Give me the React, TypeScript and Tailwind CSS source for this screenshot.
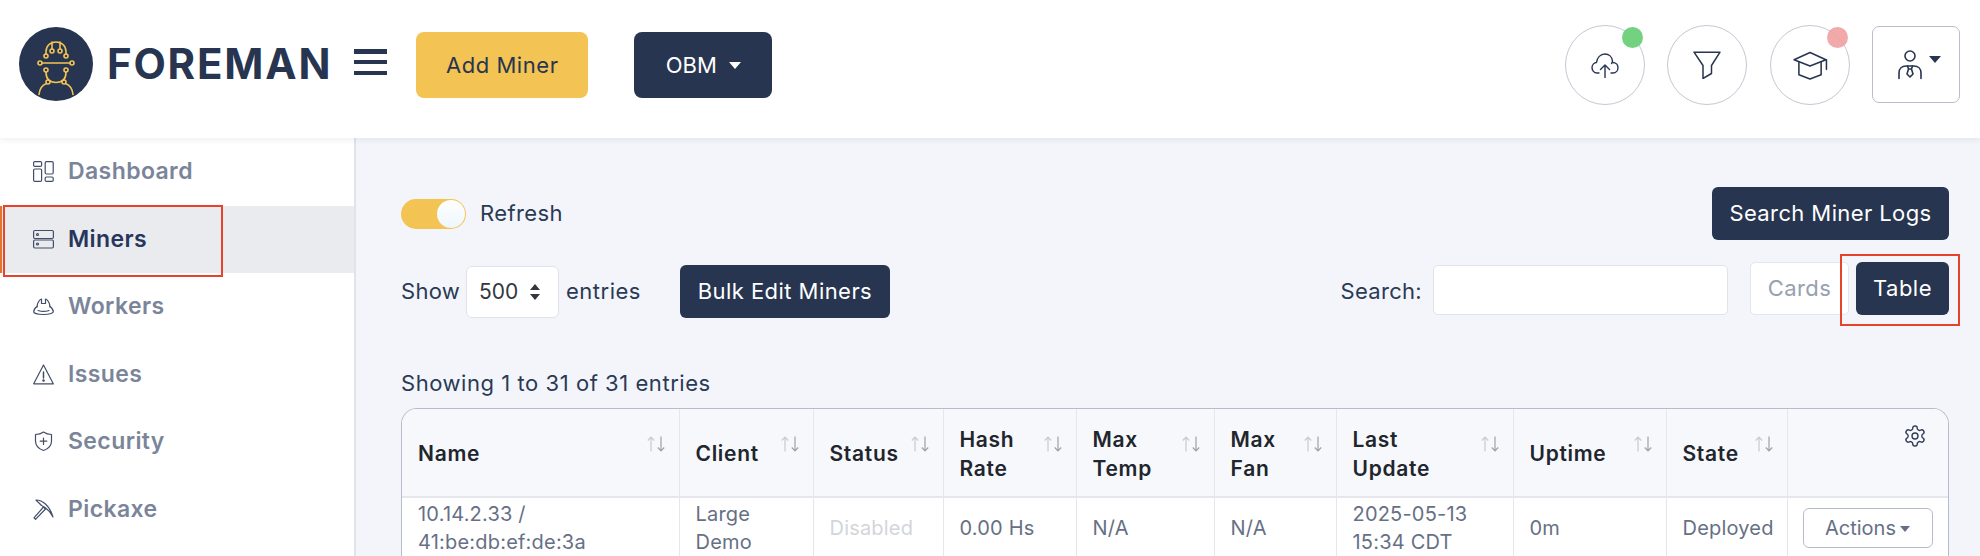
import React from "react";

const NAVY = "#273550";

function Logo() {
  return (
    <svg viewBox="0 0 74 74" className="w-[74px] h-[74px] shrink-0">
      <circle cx="37" cy="37" r="37" fill={NAVY} />
      <g fill="none" stroke="#f3c353" strokeWidth="1.6" strokeLinecap="round">
        <path d="M27 27.500v-2.500c0-6 4-10 10-10s10 4 10 10v2.500" />
        <circle cx="27" cy="29" r="2" />
        <circle cx="47" cy="29" r="2" />
        <path d="M33 15v7M41 15v7" />
        <circle cx="33" cy="24" r="2" />
        <circle cx="41" cy="24" r="2" />
        <path d="M23 36h28" />
        <circle cx="21" cy="36" r="2" />
        <circle cx="53" cy="36" r="2" />
        <circle cx="27" cy="43" r="2" />
        <circle cx="47" cy="43" r="2" />
        <path d="M27 45c0 7 4 10.500 10 10.500s10-3.500 10-10.500" />
        <circle cx="29" cy="55" r="2" />
        <circle cx="45" cy="55" r="2" />
        <path d="M27.500 56.500c-4 1.500-7 5.500-7.500 11M46.500 56.500c4 1.500 7 5.500 7.500 11" />
      </g>
    </svg>
  );
}

function CloudIcon() {
  return (
    <svg viewBox="0 0 28 25" className="w-[28px] h-[25px]" fill="none" stroke={NAVY} strokeWidth="1.400" strokeLinecap="round" strokeLinejoin="round">
      <path d="M8 20H6C3 20 1 17.500 1 14.500 1 11.500 3.500 9.500 5.500 9.500 6 4.500 9.500 1 14 1 18 1 21 4 21.500 8 21.500 9 21 10 20.500 10.500" />
      <path d="M21.500 9.500C25 9.500 27 12 27 14.500 27 17.500 25 20 22 20H20" />
      <path d="M14 24.500V12M9.500 16.500L14 12l4.500 4.500" />
    </svg>
  );
}

function FunnelIcon() {
  return (
    <svg viewBox="0 0 28 28" className="w-[28px] h-[28px]" fill="none" stroke={NAVY} strokeWidth="1.500" strokeLinejoin="round">
      <path d="M1 1.200h26L18.500 14.500V22.500L10 27.500V14.500Z" />
    </svg>
  );
}

function CapIcon() {
  return (
    <svg viewBox="0 0 36 30" className="w-[35px] h-[29px]" fill="none" stroke={NAVY} strokeWidth="1.600" strokeLinejoin="round" strokeLinecap="round">
      <path d="M1 9L17.500 1.500 34 9 17.500 15.500Z" />
      <path d="M6 11.500V24.500L17.500 29 29 24.500V11.500" />
      <path d="M34.500 9V19" />
    </svg>
  );
}

function UserIcon() {
  return (
    <svg viewBox="0 0 24 30" className="w-[24px] h-[30px]" fill="none" stroke={NAVY} strokeWidth="1.600" strokeLinejoin="round" strokeLinecap="round">
      <circle cx="12" cy="6" r="5" />
      <path d="M1 28.500V23c0-4.500 3-7 7-7h8c4 0 7 2.500 7 7v5.500" />
      <path d="M9.500 16l1 3-1.500 5 3 3 3-3-1.500-5 1-3M10.500 19h3" />
    </svg>
  );
}

function NavIcon({ name }: { name: string }) {
  const common = { viewBox: "0 0 21 21", className: "w-[21px] h-[21px] shrink-0", fill: "none", stroke: "#414e68", strokeWidth: 1.2, strokeLinejoin: "round" as const, strokeLinecap: "round" as const };
  if (name === "Dashboard") {
    return (
      <svg {...common}>
        <rect x="0.600" y="0.600" width="8" height="4.800" rx="1.200" />
        <rect x="0.600" y="8" width="8" height="12.400" rx="1.200" />
        <rect x="12.200" y="0.600" width="8" height="12.400" rx="1.200" />
        <rect x="12.200" y="16" width="8" height="4.400" rx="1.200" />
      </svg>
    );
  }
  if (name === "Miners") {
    return (
      <svg {...common}>
        <rect x="0.600" y="1.500" width="19.800" height="8" rx="1.200" />
        <rect x="0.600" y="11" width="19.800" height="8" rx="1.200" />
        <circle cx="4.500" cy="5.500" r="1" />
        <circle cx="4.500" cy="15" r="1" />
      </svg>
    );
  }
  if (name === "Workers") {
    return (
      <svg {...common}>
        <path d="M4 11C4 7 6.500 3.500 8.500 3V7.500h4V3C14.500 3.500 17 7 17 11" />
        <path d="M4 10.500C2 12 .7 14.200 .7 15.800c0 1 2.800 2.700 9.800 2.700s9.800-1.700 9.800-2.700C20.300 14.200 19 12 17 10.500" />
        <path d="M5 14.500c3 1 8 1 11 0" />
      </svg>
    );
  }
  if (name === "Issues") {
    return (
      <svg {...common}>
        <path d="M10.500 1L.7 19.800h19.600Z" />
        <path d="M10.500 8v6" strokeWidth="1.500" />
        <circle cx="10.500" cy="16.500" r=".7" fill="#414e68" />
      </svg>
    );
  }
  if (name === "Security") {
    return (
      <svg {...common}>
        <path d="M10.500 1c2 1.500 5 2.500 8 2.500V10c0 4.500-3.500 8-8 9.500C6 18 2.500 14.500 2.500 10V3.500C5.500 3.500 8.500 2.500 10.500 1Z" />
        <path d="M10.500 7v6.500M7.200 10.200h6.600" />
      </svg>
    );
  }
  return (
    <svg {...common}>
      <path d="M3 1C9 1 16.500 6 20 18 17 12 13 8.500 8.500 6.500L5.500 3.500C4.500 2.800 3.500 2 3 1Z" />
      <path d="M1 18.800l1.500 1.500L12.500 10 10.500 8Z" />
    </svg>
  );
}

function SortIcon() {
  return (
    <svg viewBox="0 0 20 16" className="w-[20px] h-[16px] shrink-0" fill="none" strokeWidth="1.200">
      <path d="M5 15.500V1.500M1.800 4.500L5 1.200l3.200 3.300" stroke="#c6cad1" />
      <path d="M15 .5v14M11.800 11.500L15 14.800l3.200-3.300" stroke="#9ba1ab" />
    </svg>
  );
}

const NAV = ["Dashboard", "Miners", "Workers", "Issues", "Security", "Pickaxe"];

function Sidebar() {
  return (
    <aside className="w-[356px] shrink-0 bg-white border-r-2 border-[#dfe3ea]">
      {NAV.map((item) => {
        const active = item === "Miners";
        return (
          <div
            key={item}
            className={`relative flex items-center h-[67.500px] pl-[33px] gap-[14px] text-[23px] tracking-[0.4px] font-semibold ${active ? "bg-[#e9ebef] text-[#27365a]" : "text-[#7b859a]"}`}
          >
            <NavIcon name={item} />
            <span className="leading-none">{item}</span>
            {active && (
              <>
                <span className="absolute left-0 top-0 bottom-0 w-[2px] bg-[#e0752d]" />
                <span className="absolute left-[3px] top-[-1px] w-[220px] h-[72px] border-2 border-[#e8432a]" />
              </>
            )}
          </div>
        );
      })}
    </aside>
  );
}

type Col = { label: string[]; width: number; cell: React.ReactNode };

const COLUMNS: Col[] = [
  { label: ["Name"], width: 277, cell: <>10.14.2.33 /<br />41:be:db:ef:de:3a</> },
  { label: ["Client"], width: 134, cell: <>Large<br />Demo</> },
  { label: ["Status"], width: 130, cell: <span className="text-[#d3d5d9]">Disabled</span> },
  { label: ["Hash", "Rate"], width: 133, cell: "0.00 Hs" },
  { label: ["Max", "Temp"], width: 138, cell: "N/A" },
  { label: ["Max", "Fan"], width: 122, cell: "N/A" },
  { label: ["Last", "Update"], width: 177, cell: <>2025-05-13<br />15:34 CDT</> },
  { label: ["Uptime"], width: 153, cell: "0m" },
  { label: ["State"], width: 121, cell: "Deployed" },
];

function MinersTable() {
  return (
    <div className="w-[1548px] h-[200px] rounded-tl-[16px] rounded-tr-[16px] border border-b-0 border-[#b6bccb] overflow-hidden bg-white">
      <table className="table-fixed border-collapse w-full">
        <colgroup>
          {COLUMNS.map((c) => (
            <col key={c.label.join()} style={{ width: c.width }} />
          ))}
          <col />
        </colgroup>
        <thead>
          <tr className="h-[88px] bg-[#f7f8fb] border-b-2 border-[#e5e7ec]">
            {COLUMNS.map((c, i) => (
              <th
                key={c.label.join()}
                className={`relative pl-[16px] pt-[2px] text-left align-middle text-[21px] tracking-[0.7px] leading-[29px] font-semibold text-[#21252d] ${i > 0 ? "border-l border-[#e5e7ec]" : ""}`}
              >
                {c.label.map((l) => (
                  <div key={l}>{l}</div>
                ))}
                <span className="absolute right-[13px] top-[27px]">
                  <SortIcon />
                </span>
              </th>
            ))}
            <th className="relative border-l border-[#e5e7ec]">
              <svg viewBox="0 0 24 24" className="absolute right-[21px] top-[15px] w-[24px] h-[24px]" fill="none" stroke="#2f3d58" strokeWidth="1.400" strokeLinecap="round" strokeLinejoin="round">
                <path d="M12.220 2h-.44a2 2 0 0 0-2 2v.18a2 2 0 0 1-1 1.730l-.43.250a2 2 0 0 1-2 0l-.150-.080a2 2 0 0 0-2.730.730l-.220.380a2 2 0 0 0 .730 2.730l.150.100a2 2 0 0 1 1 1.720v.510a2 2 0 0 1-1 1.740l-.150.090a2 2 0 0 0-.730 2.730l.220.380a2 2 0 0 0 2.730.730l.150-.080a2 2 0 0 1 2 0l.430.250a2 2 0 0 1 1 1.730V20a2 2 0 0 0 2 2h.440a2 2 0 0 0 2-2v-.180a2 2 0 0 1 1-1.730l.430-.250a2 2 0 0 1 2 0l.150.080a2 2 0 0 0 2.730-.730l.220-.390a2 2 0 0 0-.730-2.730l-.150-.080a2 2 0 0 1-1-1.740v-.500a2 2 0 0 1 1-1.740l.150-.090a2 2 0 0 0 .730-2.730l-.220-.380a2 2 0 0 0-2.730-.730l-.150.080a2 2 0 0 1-2 0l-.430-.250a2 2 0 0 1-1-1.730V4a2 2 0 0 0-2-2z" />
                <circle cx="12" cy="12" r="3" />
              </svg>
            </th>
          </tr>
        </thead>
        <tbody>
          <tr className="h-[60px]">
            {COLUMNS.map((c, i) => (
              <td
                key={c.label.join()}
                className={`pl-[16px] align-middle text-[20px] tracking-[0.2px] leading-[28px] text-[#667085] ${i > 0 ? "border-l border-[#e5e7ec]" : ""}`}
              >
                {c.cell}
              </td>
            ))}
            <td className="border-l border-[#e5e7ec] pl-[15px] align-top pt-[10px]">
              <button className="w-[130px] h-[40px] rounded-[6px] border border-[#b6bccb] bg-white text-[20px] text-[#667085] flex items-center justify-center gap-[4px]">
                Actions
                <span className="w-0 h-0 border-x-[5px] border-x-transparent border-t-[6px] border-t-[#667085] mt-[2px]" />
              </button>
            </td>
          </tr>
        </tbody>
      </table>
    </div>
  );
}

export default function App() {
  return (
    <div className="w-[1980px] h-[556px] overflow-hidden flex flex-col bg-[#f3f5fa] text-[#2a3a55] font-['Inter','Liberation_Sans',sans-serif]">
      <header className="relative z-10 h-[138px] shrink-0 bg-white flex items-start pl-[19px] shadow-[0_2px_6px_rgba(39,53,80,0.08)]">
        <div className="mt-[27px]">
          <Logo />
        </div>
        <span className="ml-[14px] mt-[39px] text-[42px] leading-[50px] font-bold text-[#273550] tracking-[1.8px]">FOREMAN</span>
        <div className="ml-[22px] mt-[49px] w-[33px] h-[26px] flex flex-col justify-between">
          <span className="h-[4.500px] bg-[#273550]" />
          <span className="h-[4.500px] bg-[#273550]" />
          <span className="h-[4.500px] bg-[#273550]" />
        </div>
        <button className="ml-[29px] mt-[32px] w-[172px] h-[66px] rounded-[8px] bg-[#f3c353] text-[22px] tracking-[0.55px] text-[#273550]">Add Miner</button>
        <button className="ml-[46px] mt-[32px] w-[138px] h-[66px] rounded-[8px] bg-[#273550] text-[22px] text-white flex items-center justify-center gap-[12px]">
          OBM
          <span className="w-0 h-0 border-x-[6px] border-x-transparent border-t-[7px] border-t-white" />
        </button>
        <div className="ml-auto mr-[20px] mt-[25px] flex items-start gap-[22px]">
          <div className="relative w-[80px] h-[80px] rounded-full border border-[#c3c8d2] flex items-center justify-center">
            <CloudIcon />
            <span className="absolute right-[1px] top-[1px] w-[21px] h-[21px] rounded-full bg-[#72d27f]" />
          </div>
          <div className="mr-[1px] w-[80px] h-[80px] rounded-full border border-[#c3c8d2] flex items-center justify-center">
            <FunnelIcon />
          </div>
          <div className="relative w-[80px] h-[80px] rounded-full border border-[#c3c8d2] flex items-center justify-center">
            <CapIcon />
            <span className="absolute right-[1px] top-[1px] w-[21px] h-[21px] rounded-full bg-[#f0a0a0]/90" />
          </div>
          <div className="w-[88px] h-[77px] mt-[1px] pl-[25px] rounded-[7px] border border-[#b9bfcb] flex items-center gap-[7px]">
            <UserIcon />
            <span className="w-0 h-0 border-x-[6px] border-x-transparent border-t-[7px] border-t-[#273550] mb-[10px]" />
          </div>
        </div>
      </header>

      <div className="flex flex-1 min-h-0">
        <Sidebar />
        <main className="flex-1 pl-[45px] pr-[31px] pt-[49px]">
          <div className="flex items-center justify-between h-[53px]">
            <div className="flex items-center gap-[14px]">
              <div className="w-[65px] h-[30px] rounded-full bg-[#f3c353] flex items-center justify-end">
                <span className="w-[28px] h-[28px] mr-[1px] rounded-full bg-gradient-to-b from-white to-[#eef6fc]" />
              </div>
              <span className="text-[22px] tracking-[0.4px]">Refresh</span>
            </div>
            <button className="w-[237px] h-[53px] rounded-[6px] bg-[#273550] text-[22px] tracking-[0.4px] text-white">Search Miner Logs</button>
          </div>

          <div className="mt-[22px] flex items-start">
            <div className="flex items-center mt-[3px] h-[53px]">
              <span className="text-[22px] tracking-[0.3px] w-[65px]">Show</span>
              <div className="w-[93px] h-[52px] rounded-[6px] border border-[#dfe3ea] bg-white flex items-center pl-[12px] text-[21px] text-[#33373d] gap-[11px]">
                500
                <svg viewBox="0 0 12 16" className="w-[12px] h-[16px]" fill="#33373d">
                  <path d="M6 0l5 6H1ZM6 16l5-6H1Z" />
                </svg>
              </div>
              <span className="text-[22px] tracking-[0.5px] ml-[7px]">entries</span>
              <button className="ml-[39px] w-[210px] h-[53px] rounded-[6px] bg-[#273550] text-[22px] tracking-[0.45px] text-white">Bulk Edit Miners</button>
            </div>
            <div className="ml-auto flex items-start">
              <span className="text-[22px] tracking-[0.3px] leading-[30px] mt-[14px]">Search:</span>
              <div className="ml-[11px] mt-[3px] w-[295px] h-[50px] rounded-[5px] border border-[#dfe3ea] bg-white" />
              <button className="ml-[22px] w-[99px] h-[53px] rounded-[5px] border border-[#e3e6ec] bg-white text-[22px] tracking-[0.4px] text-[#97a1af]">Cards</button>
              <div className="relative ml-[7px]">
                <button className="block w-[93px] h-[53px] rounded-[6px] bg-[#273550] text-[22px] tracking-[0.5px] text-white">Table</button>
                <span className="absolute left-[-16px] top-[-8px] w-[120px] h-[72px] border-2 border-[#e8432a]" />
              </div>
            </div>
          </div>

          <p className="mt-[52px] text-[22px] tracking-[0.55px] leading-[26px]">Showing 1 to 31 of 31 entries</p>
          <div className="mt-[12px]">
            <MinersTable />
          </div>
        </main>
      </div>
    </div>
  );
}
